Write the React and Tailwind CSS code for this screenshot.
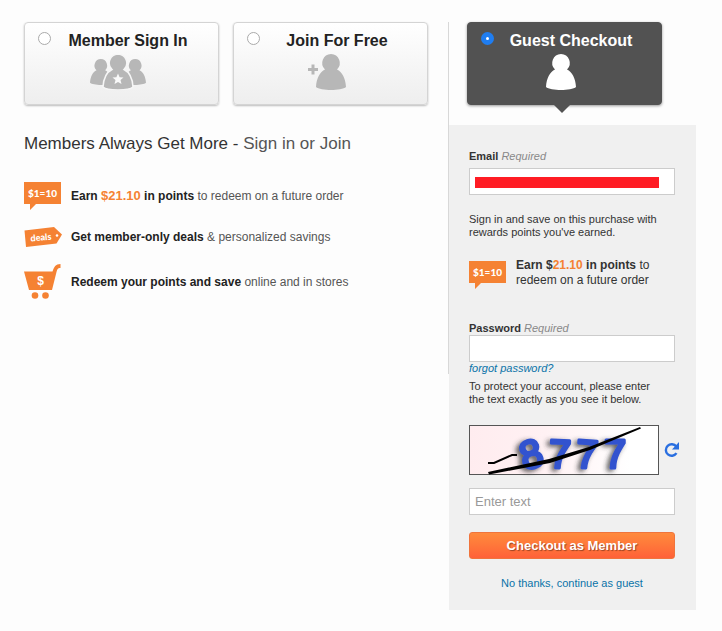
import { useState } from "react";

const PERSON =
  "M15 0a9 9 0 0 1 6 15.500c5 2.500 8.500 8.500 9 17.500-2 2-9 3-15 3s-13-1-15-3c.5-9 4-15 9-17.500A9 9 0 0 1 15 0z";

function MembersIcon() {
  return (
    <svg width="56" height="36" viewBox="0 0 56 36" aria-hidden="true">
      <g fill="#b7b7b7">
        <path transform="translate(0 5) scale(.72)" d={PERSON} />
        <path transform="translate(34.400 5) scale(.72)" d={PERSON} />
        <path transform="translate(13 0)" d={PERSON} stroke="#f6f6f6" strokeWidth="1.500" />
      </g>
      <path
        fill="#fafafa"
        d="M28 19.500l1.600 3.700 3.900.3-3 2.600 1 3.900-3.500-2.100-3.500 2.100 1-3.900-3-2.600 3.900-.3z"
      />
    </svg>
  );
}

function JoinIcon() {
  return (
    <svg width="38" height="36" viewBox="0 0 38 36" aria-hidden="true" fill="#b7b7b7">
      <path d="M3.500 10.500h3v3.500H10v3H6.500v3.500h-3V17H0v-3h3.500z" />
      <path transform="translate(8 0)" d={PERSON} />
    </svg>
  );
}

function GuestIcon() {
  return (
    <svg width="30" height="36" viewBox="0 0 30 36" aria-hidden="true" fill="#fff">
      <path d={PERSON} />
    </svg>
  );
}

function PointsIcon() {
  return (
    <svg className="shrink-0" width="37" height="28" viewBox="0 0 37 28" aria-hidden="true">
      <path fill="#f58233" d="M0 0h37v22H12l-6 6v-6H0z" />
      <text x="18.500" y="14.500" textAnchor="middle" fontSize="10" fontWeight="900" fontFamily="Lato, sans-serif" fill="#fff">
        $1=10
      </text>
    </svg>
  );
}

function DealsIcon() {
  return (
    <svg className="shrink-0" width="38" height="20" viewBox="0 0 38 20" aria-hidden="true">
      <path fill="#f58233" d="M.5 3.500L30 0l8 7.500-5.500 9L2 20z" />
      <circle cx="33" cy="8.500" r="1.300" fill="#fff" />
      <text
        x="17"
        y="13.500"
        textAnchor="middle"
        transform="rotate(-5 17 11)"
        fontSize="9"
        fontWeight="900"
        fontFamily="Lato, sans-serif"
        fill="#fff"
      >
        deals
      </text>
    </svg>
  );
}

function CartIcon() {
  return (
    <svg className="shrink-0" width="37" height="35" viewBox="0 0 37 35" aria-hidden="true">
      <path fill="#f58233" d="M0 7.500h28.500C30 3 31.500 0 36.500 0v4c-3 0-3 1-4 4l-4.500 18H5z" />
      <circle cx="11" cy="31.500" r="3.300" fill="#f58233" />
      <circle cx="21.500" cy="31.500" r="3.300" fill="#f58233" />
      <text x="16.500" y="21" textAnchor="middle" fontSize="12" fontWeight="700" fontFamily="Liberation Sans, Arial, sans-serif" fill="#fff">
        $
      </text>
    </svg>
  );
}

const digits = [
  { char: "8", x: 62, angle: -16 },
  { char: "7", x: 91, angle: 2 },
  { char: "7", x: 118, angle: 4 },
  { char: "7", x: 146, angle: 0 },
];

function CaptchaImage() {
  return (
    <svg className="block overflow-visible" width="190" height="50" viewBox="0 0 190 50" role="img" aria-label="Security text">
      <defs>
        <linearGradient id="captchaBg">
          <stop offset="0" stopColor="#ffecef" />
          <stop offset="0.4" stopColor="#fff1f3" />
          <stop offset="0.85" stopColor="#ffffff" />
        </linearGradient>
        <filter id="captchaShadow" x="-20%" y="-20%" width="150%" height="150%">
          <feDropShadow dx="-3" dy="2" stdDeviation="2.500" floodColor="#333" floodOpacity="0.8" />
        </filter>
      </defs>
      <rect x="0.500" y="0.500" width="189" height="49" fill="url(#captchaBg)" stroke="#555" />
      <g
        filter="url(#captchaShadow)"
        fill="#3153cf"
        stroke="#3153cf"
        strokeWidth="3"
        strokeLinejoin="round"
        fontFamily="Liberation Sans, Arial, sans-serif"
        fontSize="40"
        textAnchor="middle"
      >
        {digits.map((d, i) => (
          <text key={i} x={d.x} y="43" transform={`rotate(${d.angle} ${d.x} 29)`}>
            {d.char}
          </text>
        ))}
      </g>
      <path d="M19 38h6l18-8h5" fill="none" stroke="#000" strokeWidth="2" />
      <path d="M19 47L80 34 120 22 171 2l1 1.500L121 25 81 38 20 49.500z" />
    </svg>
  );
}

function Option({ id, title, icon, selected, onSelect }) {
  const active = selected === id;
  return (
    <label
      className={
        "relative flex h-[83px] rounded-[4px] border pt-[9px] pl-[13px] pr-[13px] cursor-pointer " +
        (active
          ? "border-[#525252] bg-[#525252] text-white shadow-[0_1px_3px_#00000066]"
          : "border-[#d4d4d4] bg-linear-to-b from-white to-[#eeeeee] text-[#222222] shadow-[0_1px_2px_#bbbbbb]")
      }
    >
      <input
        type="radio"
        name="checkout"
        value={id}
        checked={active}
        onChange={() => onSelect(id)}
        className="size-[13px] shrink-0 appearance-none rounded-full border border-[#aaaaaa] bg-white checked:border-5 checked:border-[#1f7df0]"
      />
      <span className="flex flex-1 flex-col items-center">
        <span className="text-base leading-[18px] font-bold">{title}</span>
        <span className="mt-1 pr-5">{icon}</span>
      </span>
      {active && (
        <span className="absolute top-full left-1/2 -ml-3 border-x-9 border-t-9 border-x-transparent border-t-[#525252]" />
      )}
    </label>
  );
}

function Benefit({ icon, children }) {
  return (
    <li className="flex items-center">
      <span className="w-[47px] shrink-0">{icon}</span>
      <span>{children}</span>
    </li>
  );
}

const field = "block h-[27px] w-full border border-[#cccccc] bg-white px-[5px]";

export default function App() {
  const [selected, setSelected] = useState("guest");
  const [email, setEmail] = useState("");
  const [password, setPassword] = useState("");
  const [code, setCode] = useState("");

  return (
    <main className="flex min-h-screen items-start bg-[#fdfdfd] pt-[22px] pr-[26px] pb-5 pl-6 font-['Liberation_Sans',Arial,sans-serif] text-[#333333]">
      <section className="min-h-[352px] flex-1 border-r border-[#d8d8d8] pr-5">
        <div className="grid grid-cols-2 gap-[14px]">
          <Option id="member" title="Member Sign In" icon={<MembersIcon />} selected={selected} onSelect={setSelected} />
          <Option id="join" title="Join For Free" icon={<JoinIcon />} selected={selected} onSelect={setSelected} />
        </div>

        <h1 className="mt-[29px] text-[17px] leading-5 text-[#333333]">
          Members Always Get More - <span className="text-[#555555]">Sign in or Join</span>
        </h1>

        <ul className="mt-7 flex flex-col gap-[17px] text-xs text-[#555555] [&_b]:text-[#222222]">
          <Benefit icon={<PointsIcon />}>
            <b>
              Earn <span className="text-[13px] text-[#f58233]">$21.10</span> in points
            </b>{" "}
            to redeem on a future order
          </Benefit>
          <Benefit icon={<DealsIcon />}>
            <b>Get member-only deals</b> &amp; personalized savings
          </Benefit>
          <Benefit icon={<CartIcon />}>
            <b>Redeem your points and save</b> online and in stores
          </Benefit>
        </ul>
      </section>

      <section className="w-[247px] shrink-0">
        <div className="mr-[34px] ml-[18px]">
          <Option id="guest" title="Guest Checkout" icon={<GuestIcon />} selected={selected} onSelect={setSelected} />
        </div>

        <form
          className="mt-5 bg-[#f0f0f0] pt-[25px] pr-[21px] pb-5 pl-5 text-[11px] leading-[13px]"
          onSubmit={(e) => e.preventDefault()}
        >
          <label htmlFor="email" className="block">
            <b>Email</b> <i className="text-[#888888]">Required</i>
          </label>
          <div className="relative mt-[5px]">
            <input id="email" type="email" value={email} onChange={(e) => setEmail(e.target.value)} className={field} />
            <span className="absolute top-[9px] left-[6px] h-[11px] w-[184px] bg-[#ff1c24]" />
          </div>

          <p className="mt-[18px]">Sign in and save on this purchase with rewards points you've earned.</p>

          <div className="mt-[18px] flex items-center text-xs leading-[15px]">
            <span className="w-[47px] shrink-0 pt-1">
              <PointsIcon />
            </span>
            <p>
              <b>
                Earn $<span className="text-[#f58233]">21.10</span> in points
              </b>{" "}
              to redeem on a future order
            </p>
          </div>

          <label htmlFor="password" className="mt-[33px] block">
            <b>Password</b> <i className="text-[#888888]">Required</i>
          </label>
          <input
            id="password"
            type="password"
            value={password}
            onChange={(e) => setPassword(e.target.value)}
            className={field}
          />
          <a href="#forgot" className="block text-[#0a73a8] italic">
            forgot password?
          </a>

          <p className="mt-[5px] pr-3">To protect your account, please enter the text exactly as you see it below.</p>

          <div className="mt-[19px] -mr-3 flex items-center gap-[5px]">
            <CaptchaImage />
            <button type="button" aria-label="New security text">
              <svg width="16" height="16" viewBox="0 0 16 16" fill="none" aria-hidden="true">
                <path d="M12.500 11.200A5.800 5.800 0 1 1 12.300 4.500" stroke="#2a6fe0" strokeWidth="2.400" />
                <path d="M15 0v7.500H8z" fill="#2a6fe0" />
              </svg>
            </button>
          </div>

          <input
            type="text"
            aria-label="Enter text"
            placeholder="Enter text"
            value={code}
            onChange={(e) => setCode(e.target.value)}
            className={field + " mt-[13px] text-[13px] placeholder:text-[#999999]"}
          />

          <button
            type="submit"
            className="mt-[17px] h-[27px] w-full rounded-[3px] border border-[#f0743c] bg-linear-to-b from-[#ff8a3c] to-[#ff6138] text-[13px] font-bold text-white text-shadow-[1px_1px_1px_#00000066]"
          >
            Checkout as Member
          </button>

          <a href="#guest" className="mt-[18px] block text-center text-[#0a73a8]">
            No thanks, continue as guest
          </a>
        </form>
      </section>
    </main>
  );
}
